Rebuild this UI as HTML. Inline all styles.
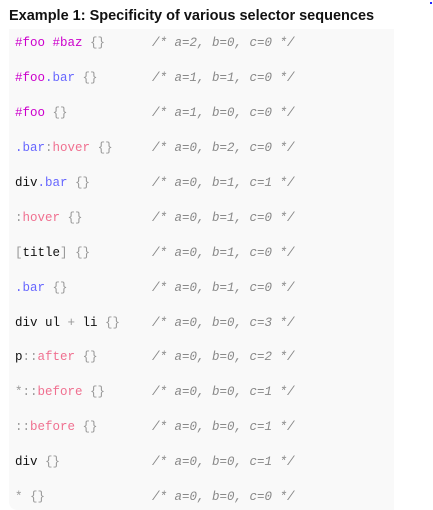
<!DOCTYPE html>
<html><head><style>
body{margin:0;width:433px;height:510px;background:#fff;position:relative;overflow:hidden;font-family:"Liberation Mono",monospace}
h1{position:absolute;left:9px;top:8px;margin:0;font:bold 14.5px "Liberation Sans",sans-serif;color:#111}
.box{position:absolute;left:9px;top:29px;width:385px;height:481px;background:#f9f9f9;border-radius:0 0 0 8px}
.r{position:absolute;left:15px;font-size:12.5px;line-height:16px;color:#111;white-space:pre}
.c{position:absolute;left:152px;font-size:12.5px;line-height:16px;color:#888;font-style:italic;white-space:pre}
.i{color:#c0c}.k{color:#66f}.p{color:#f07090}.g{color:#999}
.dot{position:absolute;left:430px;top:2px;width:2px;height:2px;background:#22f}
</style></head><body>
<h1>Example 1: Specificity of various selector sequences</h1>
<div class="dot"></div>
<div class="box"></div>
<div class="r" style="top:35px"><span class="i">#foo #baz</span> <span class="g">{}</span></div><div class="c" style="top:35px">/* a=2, b=0, c=0 */</div>
<div class="r" style="top:70px"><span class="i">#foo</span><span class="k">.bar</span> <span class="g">{}</span></div><div class="c" style="top:70px">/* a=1, b=1, c=0 */</div>
<div class="r" style="top:105px"><span class="i">#foo</span> <span class="g">{}</span></div><div class="c" style="top:105px">/* a=1, b=0, c=0 */</div>
<div class="r" style="top:140px"><span class="k">.bar</span><span class="g">:</span><span class="p">hover</span> <span class="g">{}</span></div><div class="c" style="top:140px">/* a=0, b=2, c=0 */</div>
<div class="r" style="top:175px">div<span class="k">.bar</span> <span class="g">{}</span></div><div class="c" style="top:175px">/* a=0, b=1, c=1 */</div>
<div class="r" style="top:210px"><span class="g">:</span><span class="p">hover</span> <span class="g">{}</span></div><div class="c" style="top:210px">/* a=0, b=1, c=0 */</div>
<div class="r" style="top:245px"><span class="g">[</span>title<span class="g">]</span> <span class="g">{}</span></div><div class="c" style="top:245px">/* a=0, b=1, c=0 */</div>
<div class="r" style="top:280px"><span class="k">.bar</span> <span class="g">{}</span></div><div class="c" style="top:280px">/* a=0, b=1, c=0 */</div>
<div class="r" style="top:315px">div ul <span class="g">+</span> li <span class="g">{}</span></div><div class="c" style="top:315px">/* a=0, b=0, c=3 */</div>
<div class="r" style="top:349px">p<span class="g">::</span><span class="p">after</span> <span class="g">{}</span></div><div class="c" style="top:349px">/* a=0, b=0, c=2 */</div>
<div class="r" style="top:384px"><span class="g">*::</span><span class="p">before</span> <span class="g">{}</span></div><div class="c" style="top:384px">/* a=0, b=0, c=1 */</div>
<div class="r" style="top:419px"><span class="g">::</span><span class="p">before</span> <span class="g">{}</span></div><div class="c" style="top:419px">/* a=0, b=0, c=1 */</div>
<div class="r" style="top:454px">div <span class="g">{}</span></div><div class="c" style="top:454px">/* a=0, b=0, c=1 */</div>
<div class="r" style="top:489px"><span class="g">* {}</span></div><div class="c" style="top:489px">/* a=0, b=0, c=0 */</div>
</body></html>
